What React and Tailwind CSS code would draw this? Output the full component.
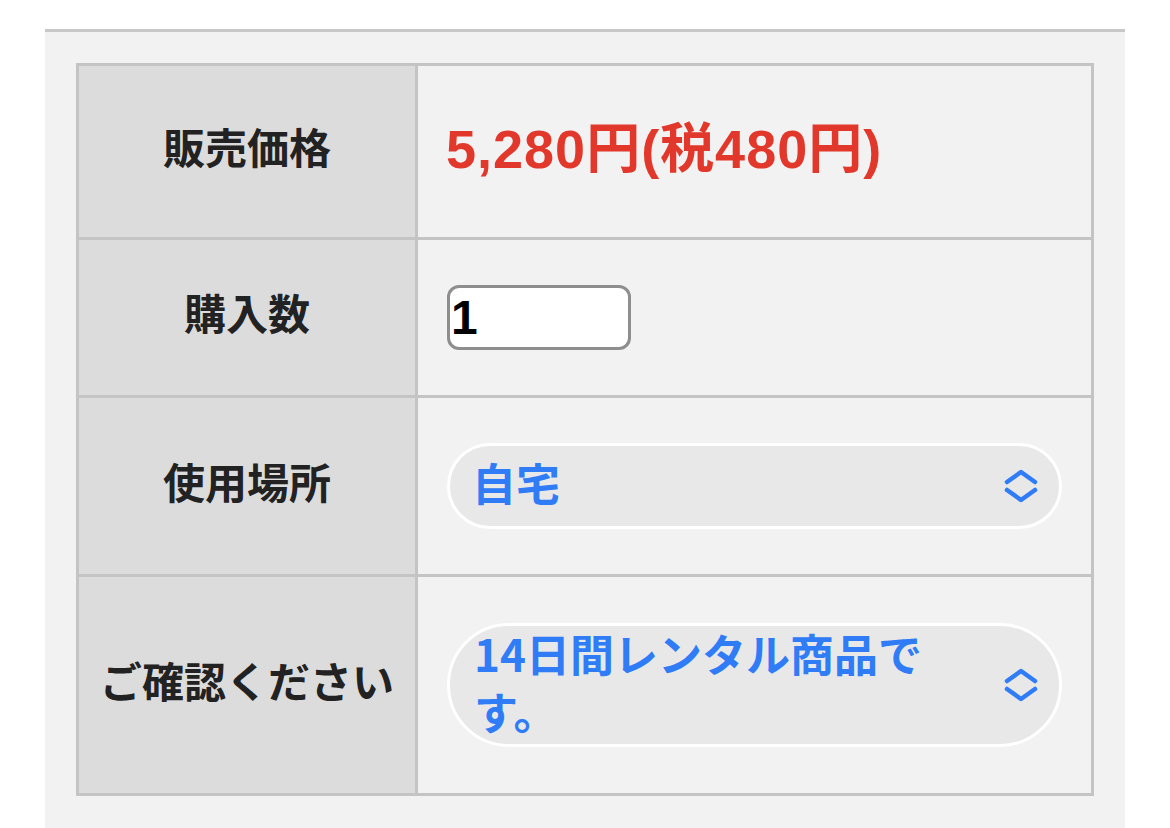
import React from "react";

const font = { fontFamily: '"Noto Sans CJK JP", "Noto Sans", sans-serif' };
const latinFont = { fontFamily: '"Liberation Sans", "Noto Sans CJK JP", sans-serif' };

const Chevrons = () => (
  <svg width="36" height="38" viewBox="0 0 36 38" fill="none" stroke="#2f7cf6" strokeWidth="4.5" strokeLinecap="round" strokeLinejoin="round">
    <path d="M4 15 L18 5 L32 15" />
    <path d="M4 23 L18 33 L32 23" />
  </svg>
);

const Label = ({ children, h }) => (
  <td className={`border-[3px] border-[#c4c4c4] bg-[#dcdcdc] pb-[12px] text-center align-middle text-[42px] font-bold text-[#222] ${h}`}>
    {children}
  </td>
);

export default function App() {
  return (
    <div className="min-h-[828px] bg-white pt-[29px]" style={font}>
      <div className="ml-[45px] min-h-[799px] w-[1080px] border-t-[3px] border-[#c8c8c8] bg-[#f2f2f2] px-[31px] pt-[31px]">
        <table className="w-full border-collapse">
          <tbody>
            <tr>
              <Label h="h-[174px] w-[339px]">販売価格</Label>
              <td className="border-[3px] border-[#c4c4c4] px-[28px] pb-[4px] align-middle">
                <span className="text-[54px] font-bold tracking-[1px] text-[#e2382b]" style={latinFont}>5,280円(税480円)</span>
              </td>
            </tr>
            <tr>
              <Label h="h-[158px]">購入数</Label>
              <td className="border-[3px] border-[#c4c4c4] px-[29px] align-middle">
                <div className="flex h-[65px] w-[184px] items-center rounded-[12px] border-[3px] border-[#8e8e8e] bg-white pl-[1px] text-[48px] font-bold text-black" style={latinFont}>
                  1
                </div>
              </td>
            </tr>
            <tr>
              <Label h="h-[179px]">使用場所</Label>
              <td className="border-[3px] border-[#c4c4c4] px-[29px] align-middle">
                <div className="flex h-[86px] items-center justify-between rounded-full border-[3px] border-white bg-[#e8e8e8] pl-[22px] pr-[20px]">
                  <div className="w-[500px] pb-[8px] text-[44px] font-bold leading-[58px] text-[#2f7cf6]">自宅</div>
                  <Chevrons />
                </div>
              </td>
            </tr>
            <tr>
              <Label h="h-[219px]">ご確認ください</Label>
              <td className="border-[3px] border-[#c4c4c4] px-[29px] align-middle">
                <div className="flex h-[124px] items-center justify-between rounded-[62px] border-[3px] border-white bg-[#e8e8e8] pl-[24px] pr-[20px]">
                  <div className="w-[480px] pb-[6px] text-[44px] font-bold leading-[58px] text-[#2f7cf6]">14日間レンタル商品です。</div>
                  <Chevrons />
                </div>
              </td>
            </tr>
          </tbody>
        </table>
      </div>
    </div>
  );
}
